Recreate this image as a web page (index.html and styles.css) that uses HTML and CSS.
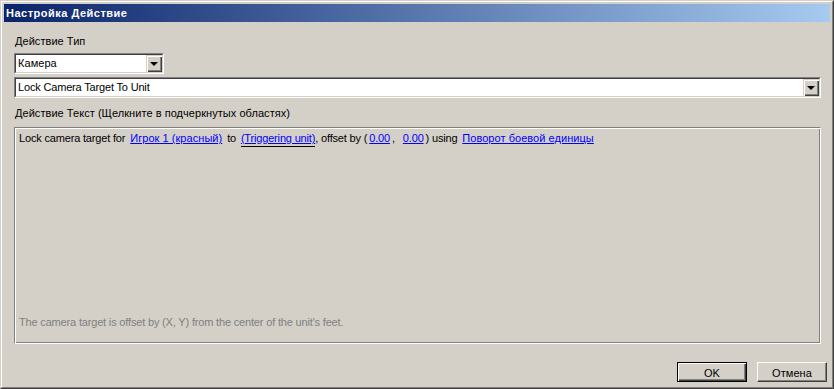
FILE: index.html
```html
<!DOCTYPE html>
<html lang="ru">
<head>
    <meta charset="UTF-8">
    <title>Настройка Действие</title>
    <link rel="stylesheet" href="styles.css">
</head>
<body>
    <div class="window">
        <div class="frame">
            <div class="titlebar">Настройка Действие</div>

            <div class="content">
                <div class="label ru">Действие Тип</div>

                <div class="combo combo-small">
                    <div class="combo-value ru">Камера</div>
                    <div class="combo-arrow"><span class="tri"></span></div>
                </div>

                <div class="combo combo-wide">
                    <div class="combo-value">Lock Camera Target To Unit</div>
                    <div class="combo-arrow"><span class="tri"></span></div>
                </div>

                <div class="label label-text ru">Действие Текст (Щелкните в подчеркнутых областях)</div>

                <div class="group">
                    <div class="sentence">
                        <span>Lock camera target for</span>
                        <a href="#" class="lnk ru">Игрок 1 (красный)</a>
                        <span>to</span>
                        <a href="#" class="lnk selected">(Triggering unit)</a><span>, offset by (</span><a href="#" class="lnk num">0.00</a><span class="comma">,</span><a href="#" class="lnk num">0.00</a><span>) using</span>
                        <a href="#" class="lnk ru">Поворот боевой единицы</a>
                    </div>
                    <div class="hint">The camera target is offset by (X, Y) from the center of the unit's feet.</div>
                </div>

                <div class="buttons">
                    <button type="button" class="btn default">OK</button>
                    <button type="button" class="btn ru">Отмена</button>
                </div>
            </div>
        </div>
    </div>
</body>
</html>
```

FILE: styles.css
```css
:root {
    --face: #d4d0c8;
    --shadow: #808080;
    --dark: #404040;
    --light: #ffffff;
    --link: #0000ff;
}

* {
    margin: 0;
    padding: 0;
    box-sizing: border-box;
}

body {
    background-color: var(--face);
    font-family: 'Liberation Sans', Arial, sans-serif;
    font-size: 11px;
    letter-spacing: -0.17px;
    color: #000;
}

/* cyrillic runs are a touch wider in the original font */
.ru {
    letter-spacing: 0.05px;
}

.window {
    width: 834px;
    height: 389px;
    border: 1px solid;
    border-color: var(--face) var(--dark) var(--dark) var(--face);
}

.frame {
    height: 100%;
    border: 1px solid;
    border-color: var(--light) var(--shadow) var(--shadow) var(--light);
    padding: 2px;
    display: flex;
    flex-direction: column;
}

.titlebar {
    height: 18px;
    line-height: 18px;
    padding-left: 2px;
    color: #fff;
    font-weight: bold;
    letter-spacing: 0.5px;
    background: linear-gradient(to right, #0a246a, #a6caf0);
}

.content {
    flex: 1;
    padding: 13px 9px 0 10px;
    display: flex;
    flex-direction: column;
}

.label {
    height: 13px;
    line-height: 13px;
    padding-left: 1px;
}

.label-text {
    margin-top: 9px;
}

/* sunken combo box */
.combo {
    height: 21px;
    margin-top: 3px;
    border: 1px solid;
    border-color: var(--shadow) var(--light) var(--light) var(--shadow);
    display: flex;
}

.combo-small {
    width: 150px;
    margin-top: 5px;
}

.combo-value {
    flex: 1;
    background: #fff;
    border-top: 1px solid var(--dark);
    border-left: 1px solid var(--dark);
    border-bottom: 1px solid var(--face);
    line-height: 17px;
    padding-left: 2px;
}

.combo-arrow {
    width: 17px;
    border-top: 1px solid var(--dark);
    border-right: 1px solid var(--face);
    border-bottom: 1px solid var(--face);
    background: var(--face);
    box-shadow: inset 1px 1px var(--face), inset 2px 2px var(--light), inset -1px -1px var(--dark), inset -2px -2px var(--shadow);
    display: flex;
    align-items: center;
    justify-content: center;
}

.tri {
    width: 0;
    height: 0;
    border-left: 4px solid transparent;
    border-right: 4px solid transparent;
    border-top: 4px solid #000;
    margin-top: 1px;
}

/* etched group */
.group {
    height: 217px;
    margin-top: 7px;
    border: 1px solid;
    border-color: var(--shadow) var(--light) var(--light) var(--shadow);
    box-shadow: inset 1px 1px var(--light), inset -1px -1px var(--shadow);
    padding: 4px 4px 14px 4px;
    display: flex;
    flex-direction: column;
}

.sentence {
    line-height: 13px;
    white-space: nowrap;
}

.lnk {
    color: var(--link);
    text-decoration: underline;
    margin: 0 2px;
}

.lnk.selected {
    border-bottom: 1px solid #000;
    padding-bottom: 2px;
    margin-right: 0;
}

.comma {
    margin-right: 6px;
}

.hint {
    margin-top: auto;
    line-height: 13px;
    color: var(--shadow);
}

.buttons {
    margin-top: 18px;
    margin-right: -6px;
    display: flex;
    justify-content: flex-end;
    gap: 10px;
}

.btn {
    width: 70px;
    height: 20px;
    font-family: inherit;
    font-size: 11px;
    color: #000;
    background: var(--face);
    border: 1px solid;
    border-color: var(--light) var(--dark) var(--dark) var(--light);
    box-shadow: inset -1px -1px var(--shadow);
    padding-top: 1px;
}

.btn.default {
    border-color: #000;
    box-shadow: inset 1px 1px var(--light), inset -1px -1px var(--dark), inset -2px -2px var(--shadow);
}
```
